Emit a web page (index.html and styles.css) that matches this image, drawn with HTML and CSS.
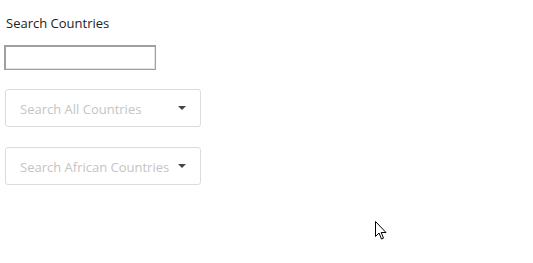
FILE: index.html
```html
<!DOCTYPE html>
<html>
<head>
<meta charset="utf-8">
<link rel="stylesheet" href="styles.css">
</head>
<body>
<div class="page">
  <label class="label" for="q">Search Countries</label>
  <input class="search" id="q" type="text">
  <div class="select">
    <span class="placeholder">Search All Countries</span>
    <span class="caret"></span>
  </div>
  <div class="select">
    <span class="placeholder">Search African Countries</span>
    <span class="caret"></span>
  </div>
</div>
<svg class="cursor" width="12" height="20" viewBox="0 0 12 20">
  <path d="M0.5 0.5 L0.5 15.5 L4 12 L6.5 18 L8.5 17.2 L6.2 11.5 L11 11.5 Z" fill="#fff" stroke="#000" stroke-width="1" stroke-linejoin="miter"/>
</svg>
</body>
</html>
```
FILE: styles.css
```css
html, body {
  margin: 0;
  padding: 0;
  background: #fff;
}
body {
  font-family: "Open Sans", "Noto Sans", sans-serif;
  font-size: 13px;
  color: #222;
  position: relative;
  width: 533px;
  height: 263px;
  overflow: hidden;
}
.page {
  display: flex;
  flex-direction: column;
  align-items: flex-start;
  padding: 14px 0 0 4px;
}
.label {
  margin-left: 2px;
  line-height: 18px;
}
.search {
  margin: 13px 0 0 0;
  width: 152px;
  height: 25px;
  box-sizing: border-box;
  border: 1px solid #a0a0a0;
  box-shadow: inset 1px 1px 0 #a0a0a0, inset -1px -1px 0 #e2e2e2;
  padding: 0;
  background: #fff;
  outline: none;
}
.select {
  margin: 19px 0 0 1px;
  width: 196px;
  height: 38px;
  box-sizing: border-box;
  border: 1px solid #dcdcdc;
  border-radius: 3px;
  display: flex;
  align-items: center;
  padding: 2px 14px 0 14px;
}
.select + .select {
  margin-top: 20px;
}
.placeholder {
  flex: 1;
  color: #c4c4c4;
}
.caret {
  width: 0;
  height: 0;
  margin-top: -2px;
  border-left: 4px solid transparent;
  border-right: 4px solid transparent;
  border-top: 4px solid #444;
}
.cursor {
  position: absolute;
  left: 375px;
  top: 221px;
}
```
